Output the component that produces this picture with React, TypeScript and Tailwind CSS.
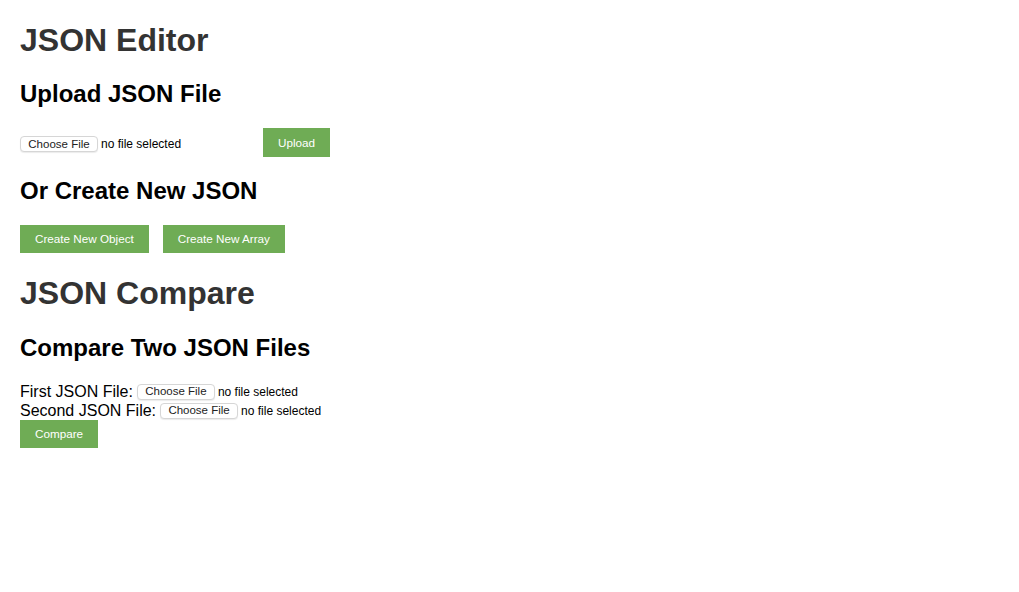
import React from "react";

function FileInput() {
  return (
    <span className="inline-flex items-center">
      <span className="inline-flex h-[16px] w-[78px] items-center justify-center rounded-[4px] border border-[#d6d6d6] bg-white text-[11.5px] leading-none text-[#222] shadow-[0_1px_1px_rgba(0,0,0,0.08)]">
        Choose File
      </span>
      <span className="ml-[3px] text-[12px] leading-none text-black">no file selected</span>
    </span>
  );
}

function GreenButton({ children, h = "h-[28px]" }: { children: React.ReactNode; h?: string }) {
  return (
    <button className={`flex ${h} items-center bg-[#6fac55] px-[15px] text-[11.7px] leading-none text-white`}>
      {children}
    </button>
  );
}

export default function App() {
  return (
    <div className="min-h-[592px] bg-white px-5 pt-[22px] font-['Liberation_Sans',Arial,sans-serif]">
      <h1 className="text-[32px] font-bold leading-[37px] text-[#333]">JSON Editor</h1>
      <h2 className="mt-[21px] text-[24px] font-bold leading-[28px] text-black">Upload JSON File</h2>
      <div className="mt-[20px] flex h-[29px] items-center">
        <div className="w-[243px]">
          <FileInput />
        </div>
        <GreenButton h="h-[29px]">Upload</GreenButton>
      </div>
      <h2 className="mt-[20px] text-[24px] font-bold leading-[28px] text-black">Or Create New JSON</h2>
      <div className="mt-[20px] flex gap-[14px]">
        <GreenButton>Create New Object</GreenButton>
        <GreenButton>Create New Array</GreenButton>
      </div>
      <h1 className="mt-[22px] text-[32px] font-bold leading-[37px] text-[#333]">JSON Compare</h1>
      <h2 className="mt-[22px] text-[24px] font-bold leading-[28px] text-black">Compare Two JSON Files</h2>
      <div className="mt-[20px] flex h-[19px] items-center text-[16px] leading-[19px] text-black">
        <span className="mr-[4px]">First JSON File:</span>
        <FileInput />
      </div>
      <div className="flex h-[19px] items-center text-[16px] leading-[19px] text-black">
        <span className="mr-[4px]">Second JSON File:</span>
        <FileInput />
      </div>
      <div className="flex">
        <GreenButton>Compare</GreenButton>
      </div>
    </div>
  );
}
